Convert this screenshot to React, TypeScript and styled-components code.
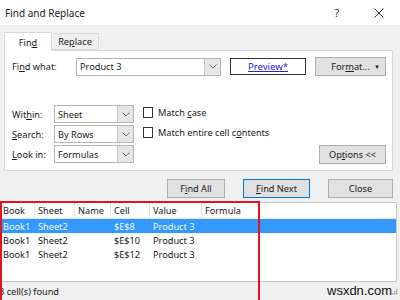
import React from "react";
import styled, { createGlobalStyle } from "styled-components";

const Global = createGlobalStyle`
  html, body { margin: 0; padding: 0; }
  body {
    width: 400px; height: 300px; overflow: hidden;
    background: #f0f0f0;
    font-family: "Noto Sans", "Open Sans", sans-serif;
    font-size: 9.2px; color: #1a1a1a;
  }
  * { box-sizing: border-box; }
`;

const Window = styled.div`
  position: relative;
  width: 400px; height: 300px;
  display: flex; flex-direction: column;
  background: #f0f0f0;
`;

const TitleBar = styled.div`
  height: 25px; background: #fff;
  display: flex; align-items: center;
  padding-left: 5px;
  font-size: 10px;
`;
const Title = styled.div`flex: 1;`;
const TitleBtn = styled.div`
  width: 42px; height: 25px;
  display: flex; align-items: center; justify-content: center;
  font-size: 11px; color: #333;
`;

const Tabs = styled.div`
  display: flex; align-items: flex-end;
  margin: 7px 0 0 4px; height: 18px;
  position: relative; z-index: 1;
`;
const Tab = styled.div<{ $active?: boolean }>`
  width: ${(p) => (p.$active ? 48 : 47)}px;
  height: ${(p) => (p.$active ? 19 : 17)}px;
  margin-bottom: ${(p) => (p.$active ? -1 : 0)}px;
  background: ${(p) => (p.$active ? "#fff" : "#f0f0f0")};
  border: 1px solid #d9d9d9;
  border-bottom: ${(p) => (p.$active ? "none" : "1px solid #d9d9d9")};
  border-left: ${(p) => (p.$active ? "1px solid #d9d9d9" : "none")};
  display: flex; align-items: center; justify-content: center;
`;

const Panel = styled.div`
  margin-left: 4px; width: 389px; height: 121px;
  background: #fff; border: 1px solid #d9d9d9;
  padding: 6px 6px 0 7px;
  display: flex; flex-direction: column;
`;

const Row = styled.div`
  display: flex; align-items: center;
`;

const Label = styled.div<{ $w: number }>`
  width: ${(p) => p.$w}px; flex: none;
`;

const U = styled.span`text-decoration: underline;`;

const Combo = styled.div<{ $w: number }>`
  width: ${(p) => p.$w}px; height: 18px; flex: none;
  display: flex; border: 1px solid #b4b4b4; background: #fff;
`;
const ComboText = styled.div`
  flex: 1; padding-left: 3px; display: flex; align-items: center;
`;
const ComboArrow = styled.div`
  width: 16px; border-left: 1px solid #c8c8c8; background: #e6e6e6;
  display: flex; align-items: center; justify-content: center;
`;

const PreviewBox = styled.div`
  width: 76px; height: 17px; margin-left: 9px;
  border: 1px solid #333; background: #fff;
  display: flex; align-items: center; justify-content: center;
  color: #2424e6; text-decoration: underline;
  font-size: 9.6px;
`;

const Button = styled.div<{ $w: number; $default?: boolean }>`
  width: ${(p) => p.$w}px; height: 19px; flex: none;
  background: #e1e1e1;
  border: 1px solid ${(p) => (p.$default ? "#0078d7" : "#adadad")};
  display: flex; align-items: center; justify-content: center;
  position: relative;
`;

const Caret = styled.span`
  position: absolute; right: 5px; top: 5px;
  font-size: 6px;
`;

const Lower = styled.div`
  display: flex; margin-top: 29px; flex: 1;
`;
const LeftCol = styled.div`
  display: flex; flex-direction: column; gap: 2px;
`;
const CheckCol = styled.div`
  display: flex; flex-direction: column; gap: 7px;
  margin-left: 9px; padding-top: 1px;
`;
const CheckRow = styled.div`
  display: flex; align-items: center; gap: 5px;
`;
const Box = styled.div`
  width: 10px; height: 11px; border: 1px solid #333; background: #fff;
`;
const OptionsWrap = styled.div`
  flex: 1; display: flex; justify-content: flex-end; align-items: flex-end;
  padding-bottom: 6px;
`;

const ButtonRow = styled.div`
  display: flex; gap: 18px; margin: 8px 0 0 167px;
`;

const List = styled.div`
  margin-top: 4px; width: 397px; height: 80px;
  background: #fff; border: 1px solid #c8c8c8; border-left: none;
`;
const HeadRow = styled.div`
  display: grid; grid-template-columns: 35px 40px 36px 39px 52px 1fr;
  height: 16px; border-bottom: 1px solid #e5e5e5;
`;
const HeadCell = styled.div`
  padding-left: 3px; display: flex; align-items: center;
  border-right: 1px solid #e5e5e5;
  &:last-child { border-right: none; }
`;
const DataRow = styled.div<{ $sel?: boolean }>`
  display: grid; grid-template-columns: 35px 40px 36px 39px 52px 1fr;
  height: 14px;
  background: ${(p) => (p.$sel ? "#3399ff" : "transparent")};
  color: ${(p) => (p.$sel ? "#f2f8ff" : "#1a1a1a")};
`;
const DataCell = styled.div`
  padding-left: 3px; display: flex; align-items: center; white-space: nowrap;
`;

const Status = styled.div`
  flex: 1; display: flex; align-items: center;
  padding-left: 0; margin-left: -1px;
  position: relative;
`;
const Watermark = styled.div`
  position: absolute; left: 328px; top: 1px;
  font-size: 13px; color: #111;
  font-family: "Liberation Sans", Arial, sans-serif;
`;
const Grip = styled.div`
  position: absolute; right: 2px; bottom: 2px;
`;

const RedFrame = styled.div`
  position: absolute; left: 0; top: 201px; width: 260px; height: 99px;
  border: 2.5px solid #e3141f; border-bottom: none;
  pointer-events: none;
`;

const Chevron = () => (
  <svg width="8" height="5" viewBox="0 0 8 5">
    <path d="M0.5 0.5 L4 4 L7.5 0.5" fill="none" stroke="#707070" strokeWidth="1" />
  </svg>
);

const ComboBox = ({ w, value }: { w: number; value: string }) => (
  <Combo $w={w}>
    <ComboText>{value}</ComboText>
    <ComboArrow>
      <Chevron />
    </ComboArrow>
  </Combo>
);

const rows = [
  { sel: true, cell: "$E$8" },
  { sel: false, cell: "$E$10" },
  { sel: false, cell: "$E$12" },
];

export default function App() {
  return (
    <Window>
      <Global />
      <TitleBar>
        <Title>Find and Replace</Title>
        <TitleBtn>?</TitleBtn>
        <TitleBtn>
          <svg width="10" height="10" viewBox="0 0 10 10">
            <path d="M0.5 0.5 L9.5 9.5 M9.5 0.5 L0.5 9.5" stroke="#333" strokeWidth="1" />
          </svg>
        </TitleBtn>
      </TitleBar>

      <Tabs>
        <Tab $active>
          Fin<U>d</U>
        </Tab>
        <Tab>
          Re<U>p</U>lace
        </Tab>
      </Tabs>

      <Panel>
        <Row>
          <Label $w={64}>
            Fi<U>n</U>d what:
          </Label>
          <ComboBox w={145} value="Product 3" />
          <PreviewBox>Preview*</PreviewBox>
          <Button $w={71} style={{ marginLeft: 9 }}>
            For<U>m</U>at...
            <Caret>▼</Caret>
          </Button>
        </Row>
        <Lower>
          <LeftCol>
            <Row>
              <Label $w={42}>
                Wit<U>h</U>in:
              </Label>
              <ComboBox w={80} value="Sheet" />
            </Row>
            <Row>
              <Label $w={42}>
                <U>S</U>earch:
              </Label>
              <ComboBox w={80} value="By Rows" />
            </Row>
            <Row>
              <Label $w={42}>
                <U>L</U>ook in:
              </Label>
              <ComboBox w={80} value="Formulas" />
            </Row>
          </LeftCol>
          <CheckCol>
            <CheckRow>
              <Box />
              <span>
                Match <U>c</U>ase
              </span>
            </CheckRow>
            <CheckRow>
              <Box />
              <span>
                Match entire cell c<U>o</U>ntents
              </span>
            </CheckRow>
          </CheckCol>
          <OptionsWrap>
            <Button $w={67}>
              Op<U>t</U>ions &lt;&lt;
            </Button>
          </OptionsWrap>
        </Lower>
      </Panel>

      <ButtonRow>
        <Button $w={58}>
          F<U>i</U>nd All
        </Button>
        <Button $w={67} $default>
          <U>F</U>ind Next
        </Button>
        <Button $w={65}>Close</Button>
      </ButtonRow>

      <List>
        <HeadRow>
          <HeadCell>Book</HeadCell>
          <HeadCell>Sheet</HeadCell>
          <HeadCell>Name</HeadCell>
          <HeadCell>Cell</HeadCell>
          <HeadCell>Value</HeadCell>
          <HeadCell>Formula</HeadCell>
        </HeadRow>
        {rows.map((r) => (
          <DataRow key={r.cell} $sel={r.sel}>
            <DataCell>Book1</DataCell>
            <DataCell>Sheet2</DataCell>
            <DataCell />
            <DataCell>{r.cell}</DataCell>
            <DataCell>Product 3</DataCell>
            <DataCell />
          </DataRow>
        ))}
      </List>

      <Status>
        3 cell(s) found
        <Watermark>wsxdn.com</Watermark>
        <Grip>
          <svg width="6" height="6" viewBox="0 0 6 6">
            <rect x="4" y="0" width="1.5" height="1.5" fill="#a0a0a0" />
            <rect x="2" y="2" width="1.5" height="1.5" fill="#a0a0a0" />
            <rect x="4" y="2" width="1.5" height="1.5" fill="#a0a0a0" />
            <rect x="0" y="4" width="1.5" height="1.5" fill="#a0a0a0" />
            <rect x="2" y="4" width="1.5" height="1.5" fill="#a0a0a0" />
            <rect x="4" y="4" width="1.5" height="1.5" fill="#a0a0a0" />
          </svg>
        </Grip>
      </Status>

      <RedFrame />
    </Window>
  );
}
